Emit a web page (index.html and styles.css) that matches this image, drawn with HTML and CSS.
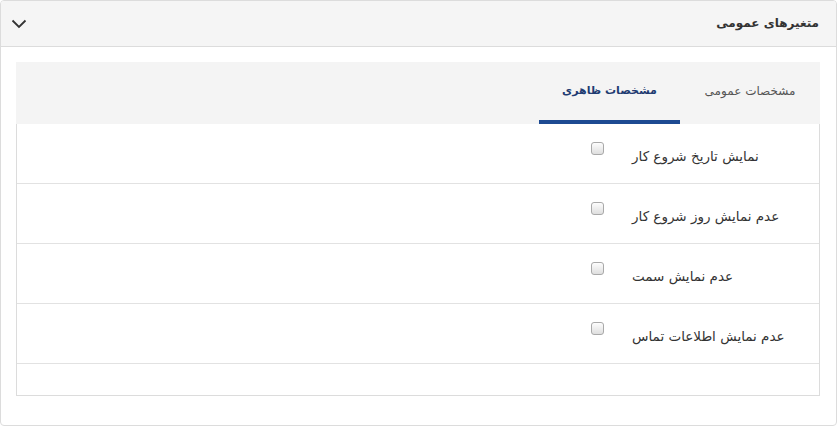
FILE: index.html
```html
<!DOCTYPE html>
<html lang="fa" dir="rtl">
<head>
    <meta charset="UTF-8">
    <meta name="viewport" content="width=device-width, initial-scale=1.0">
    <title>متغیرهای عمومی</title>

    <link rel="stylesheet" href="styles.css">
</head>
<body>

    <div class="panneau">
        <div class="entete">
            <span class="titre">متغیرهای عمومی</span>
            <svg class="chevron" width="16" height="10" viewBox="0 0 16 10">
                <path d="M1.5 1.5 L8 8 L14.5 1.5" fill="none" stroke="#333" stroke-width="1.8"/>
            </svg>
        </div>
        <div class="contenu">
            <div class="onglets">
                <div class="onglet">مشخصات عمومی</div>
                <div class="onglet actif">مشخصات ظاهری</div>
            </div>
            <div class="lignes">
                <div class="ligne">
                    <label class="option"><span class="case"></span><span class="texte" dir="rtl">نمایش تاریخ شروع کار</span></label>
                </div>
                <div class="ligne">
                    <label class="option"><span class="case"></span><span class="texte" dir="rtl">عدم نمایش روز شروع کار</span></label>
                </div>
                <div class="ligne">
                    <label class="option"><span class="case"></span><span class="texte" dir="rtl">عدم نمایش سمت</span></label>
                </div>
                <div class="ligne">
                    <label class="option"><span class="case"></span><span class="texte" dir="rtl">عدم نمایش اطلاعات تماس</span></label>
                </div>
                <div class="ligne vide"></div>
            </div>
        </div>
    </div>

</body>
</html>
```

FILE: styles.css
```css
*{
    padding: 0;
    margin: 0;
    box-sizing: border-box;
}

body{
    background-color: white;
    font-family: "DejaVu Sans", Tahoma, sans-serif;
    color: #333;
    width: 837px;
}

.panneau{
    border: 1px solid #dcdcdc;
    border-radius: 4px;
    height: 426px;
    overflow: hidden;
}

.entete{
    height: 46px;
    background-color: #f5f5f5;
    border-bottom: 1px solid #dcdcdc;
    display: flex;
    align-items: center;
    justify-content: space-between;
    padding: 0 17px 1px 10px;
}

.titre{
    font-size: 12px;
    font-weight: bold;
    color: #333;
}

.chevron{
    display: block;
    margin-top: 2px;
}

.contenu{
    padding: 15px 16px 0 15px;
}

.onglets{
    height: 62px;
    background-color: #f4f4f4;
    display: flex;
}

.onglet{
    width: 140px;
    display: flex;
    align-items: center;
    justify-content: center;
    font-size: 12px;
    color: #555;
    padding-bottom: 5px;
}

.onglet.actif{
    width: 141px;
    font-size: 11px;
    color: #1f3c72;
    font-weight: bold;
    border-bottom: 4px solid #1d4a92;
    padding-bottom: 1px;
}

.lignes{
    border: 1px solid #dcdcdc;
    border-top: none;
}

.ligne{
    height: 60px;
    border-bottom: 1px solid #e2e2e2;
    display: flex;
    padding-right: 29px;
}

.ligne.vide{
    height: 31px;
    border-bottom: none;
}

.option{
    width: 199px;
    direction: ltr;
    display: flex;
    align-items: flex-start;
    gap: 28px;
    padding-top: 18px;
}

.case{
    width: 13px;
    height: 13px;
    border: 1px solid #a9a9a9;
    border-radius: 3px;
    background: linear-gradient(#fdfdfd, #dedede);
    flex-shrink: 0;
}

.texte{
    font-size: 13.5px;
    margin-top: 6px;
    color: #333;
}
```
